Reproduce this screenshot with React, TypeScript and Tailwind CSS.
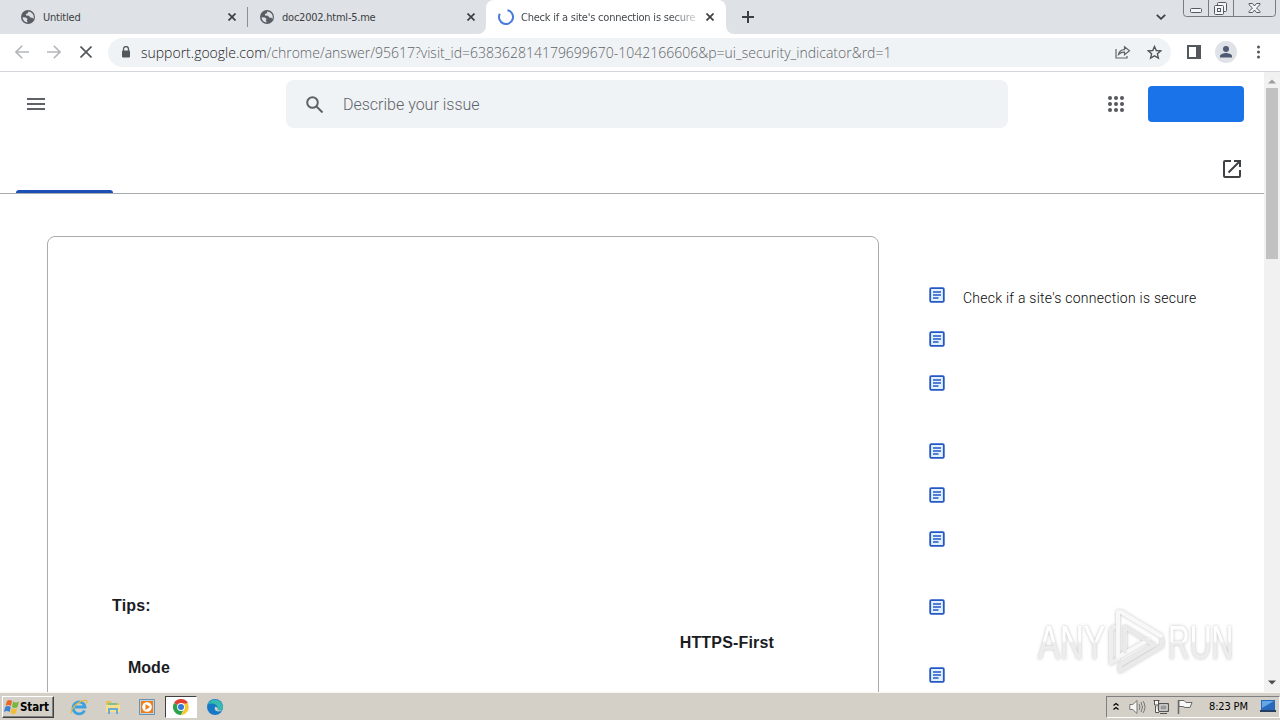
import React from 'react';

const uiFont = "font-['DejaVu_Sans_Condensed','DejaVu_Sans',sans-serif]";

function Globe() {
  return (
    <svg className="h-[14px] w-[14px] shrink-0" viewBox="0 0 14 14">
      <circle cx="7" cy="7" r="7" fill="#5a5e64" />
      <path d="M1.6 7.2 4.8 7.4 6.6 9l-.8 1.2 1 2.2A5.5 5.5 0 0 1 1.6 7.2ZM7.4 1.5l-.6 1.8-1.9.8.2 1.5 3 .2 1.1 1.6 2.2.3 1 1.2A5.5 5.5 0 0 0 7.4 1.5Z" fill="#dee1e6" />
    </svg>
  );
}

function Cross({ className = '' }: { className?: string }) {
  return (
    <svg className={`h-2 w-2 shrink-0 ${className}`} viewBox="0 0 8 8" stroke="#3c4043" strokeWidth="1.7">
      <path d="M.5.5l7 7M7.5.5l-7 7" />
    </svg>
  );
}

function TabStrip() {
  return (
    <div className={`flex h-[34px] bg-[#dee1e6] text-[11px] leading-[14px] text-[#3c4043] ${uiFont}`}>
      <div className="flex w-[247px] items-center pr-[11px] pl-[21px]">
        <Globe />
        <span className="mt-[2px] ml-2 flex-1 tracking-[-0.2px]">Untitled</span>
        <Cross />
      </div>
      <div className="mt-[7px] h-5 w-px bg-[#8b8e93]" />
      <div className="flex w-[238px] items-center pr-[11px] pl-3">
        <Globe />
        <span className="mt-[2px] ml-2 flex-1 tracking-[-0.23px]">doc2002.html-5.me</span>
        <Cross />
      </div>
      <div className="relative flex w-[240px] items-center rounded-t-lg bg-white pr-3 pl-3">
        <svg className="absolute bottom-0 -left-2 h-2 w-2" viewBox="0 0 8 8"><path d="M8 0v8H0a8 8 0 0 0 8-8Z" fill="#fff" /></svg>
        <svg className="absolute -right-2 bottom-0 h-2 w-2" viewBox="0 0 8 8"><path d="M0 0v8h8a8 8 0 0 1-8-8Z" fill="#fff" /></svg>
        <svg className="h-4 w-4 shrink-0" viewBox="0 0 16 16" fill="none" stroke="#4a7bdc" strokeWidth="2"><path d="M9.5 1.2A7 7 0 1 1 1.8 4.8" /></svg>
        <span className="mt-[2px] ml-[7px] w-[175px] overflow-hidden bg-linear-to-r from-[#3c4043] from-85% to-[#d5d7da] bg-clip-text whitespace-nowrap text-transparent tracking-[-0.22px]">Check if a site's connection is secure</span>
        <Cross className="ml-[10px]" />
      </div>
      <svg className="mt-[11px] ml-4 h-3 w-3" viewBox="0 0 12 12" stroke="#3c4043" strokeWidth="2"><path d="M6 0v12M0 6h12" /></svg>
      <svg className="mt-[14px] ml-[402px] h-[6px] w-[10px]" viewBox="0 0 10 6" fill="none" stroke="#3c4043" strokeWidth="1.8"><path d="m.8.8 4.2 4 4.2-4" /></svg>
      <svg className="ml-[16px] h-[18px] w-[95px]" viewBox="0 0 95 18" fill="none" stroke="#777b82">
        <path d="M1.5 0v13.5q0 3 3 3h86q3 0 3-3V0M26.5 0v16M51.5 0v16" />
        <g stroke="#555961"><rect x="8.500" y="8.500" width="11" height="4" rx="1" fill="#f4f5f7" />
        <rect x="35.500" y="2.500" width="9" height="9" rx="1" fill="#f4f5f7" /><rect x="32.500" y="5.500" width="9" height="9" rx="1" fill="#f4f5f7" /><rect x="35.500" y="8.500" width="3" height="3" />
        <path d="M67 3.500h3.500l2 2.500 2-2.500H78v1.200L74.500 8l3.500 3.500v1h-3.500l-2-2.500-2 2.500H67v-1L70.500 8 67 4.700Z" fill="#f4f5f7" /></g>
      </svg>
    </div>
  );
}

function Toolbar() {
  return (
    <div className="flex h-[38px] items-center border-b border-[#d3d6da] bg-white pb-px pl-[15px]">
      <svg className="h-[14px] w-[14px]" viewBox="0 0 14 14" fill="none" stroke="#b4b6b9" strokeWidth="1.6"><path d="M14 7H1M7.200.8 1 7l6.200 6.200" /></svg>
      <svg className="ml-[18px] h-[14px] w-[14px]" viewBox="0 0 14 14" fill="none" stroke="#b4b6b9" strokeWidth="1.600"><path d="M0 7h13M6.800.8 13 7l-6.200 6.200" /></svg>
      <svg className="ml-[19px] h-3 w-3" viewBox="0 0 12 12" stroke="#54575b" strokeWidth="1.700"><path d="m.5.5 11 11M11.500.5l-11 11" /></svg>
      <div className="ml-4 flex h-[29px] w-[1063px] items-center rounded-full bg-[#f0f3f5] pl-[13px]">
        <svg className="h-3 w-[10px]" viewBox="0 0 10 12"><path d="M2.500 5V3a2.500 2.500 0 0 1 5 0v2" fill="none" stroke="#54585d" strokeWidth="1.300" /><rect x="1" y="4.500" width="8" height="7" rx="1" fill="#54585d" /></svg>
        <span className="mt-[2px] ml-[10px] w-[751px] font-['Open_Sans','Noto_Sans',sans-serif] text-[14px] leading-5 font-light whitespace-nowrap text-[#5f6368]"><span className="text-[#202124]">support.google.com</span>/chrome/answer/95617?visit_id=638362814179699670-1042166606&amp;p=ui_security_indicator&amp;rd=1</span>
        <svg className="ml-[223px] h-[14px] w-4" viewBox="0 0 16 14" fill="none" stroke="#5f6368" strokeWidth="1.200"><path d="M1 4v9h11v-2M3.500 9.500c.6-3 2.600-4.700 6-4.800V1.800l5 4-5 4V7.200c-2.600 0-4.400.7-6 2.300Z" /></svg>
        <svg className="ml-4 h-[15px] w-[15px]" viewBox="0 0 15 15" fill="none" stroke="#54575b" strokeWidth="1.400"><path d="m7.500 1.500 1.800 4 4.400.4-3.300 2.900 1 4.300-3.900-2.300-3.900 2.300 1-4.300L1.300 5.900l4.400-.4Z" /></svg>
      </div>
      <svg className="ml-4 h-[14px] w-[14px]" viewBox="0 0 14 14"><path d="M1 1h12v12H1z" fill="none" stroke="#54575b" strokeWidth="2" /><path d="M9 1h4v12H9z" fill="#54575b" /></svg>
      <svg className="ml-[14px] h-[22px] w-[22px]" viewBox="0 0 22 22"><circle cx="11" cy="11" r="11" fill="#dfe2e7" /><circle cx="11" cy="8" r="3" fill="#4f5b73" /><path d="M5 16.500v-1.500c0-2 4-3 6-3s6 1 6 3v1.500Z" fill="#4f5b73" /></svg>
      <svg className="ml-5 h-[14px] w-[3px]" viewBox="0 0 3 14" fill="#54575b"><circle cx="1.500" cy="2" r="1.500" /><circle cx="1.500" cy="7" r="1.500" /><circle cx="1.500" cy="12" r="1.500" /></svg>
    </div>
  );
}

function ArticleIcon() {
  return (
    <svg className="h-4 w-4 shrink-0" viewBox="0 0 16 16" fill="none" stroke="#2458c2" strokeWidth="1.800">
      <rect x="1.200" y="1.200" width="13.600" height="13.600" rx="1" fill="#e3f0ff" /><path d="M4 5h8M4 8h8M4 11h5.500" strokeWidth="1.600" />
    </svg>
  );
}

const links = [
  { label: "Check if a site's connection is secure", height: 'h-11' },
  { label: '', height: 'h-11' },
  { label: '', height: 'h-[68px]' },
  { label: '', height: 'h-11' },
  { label: '', height: 'h-11' },
  { label: '', height: 'h-[68px]' },
  { label: '', height: 'h-[68px]' },
  { label: '', height: 'h-4' },
];

function Page() {
  return (
    <main className="flex min-w-0 flex-1 flex-col overflow-hidden bg-white font-['Liberation_Sans',Arial,sans-serif]">
      <header className="flex h-[64px] items-center pl-[27px]">
        <svg className="h-3 w-[18px]" viewBox="0 0 18 12" fill="#5f6368"><path d="M0 0h18v2H0zM0 5h18v2H0zM0 10h18v2H0z" /></svg>
        <div className="ml-[241px] flex h-12 w-[722px] items-center rounded-lg bg-[#eff3f6] pl-5">
          <svg className="h-[17px] w-[17px]" viewBox="0 0 17 17" fill="none" stroke="#5f6368" strokeWidth="2"><circle cx="6.500" cy="6.500" r="5.300" /><path d="m10.500 10.500 6 6" /></svg>
          <span className="mt-px ml-5 font-['Roboto',sans-serif] text-[16px] leading-6 font-light text-[#5f6368]">Describe your issue</span>
        </div>
        <svg className="ml-[100px] h-4 w-4" viewBox="0 0 16 16" fill="#54575b">
          {[2, 8, 14].map((y) => [2, 8, 14].map((x) => <circle key={`${x}-${y}`} cx={x} cy={y} r="2" />))}
        </svg>
        <div className="ml-6 h-9 w-24 rounded-[4px] bg-[#1a73e8]" />
      </header>
      <nav className="flex h-[58px] items-end justify-between border-b border-[#a9abae] pr-[23px] pl-4">
        <div className="h-[3px] w-[97px] rounded-t-[3px] bg-[#1b4fb3]" />
        <svg className="mb-[15px] h-[18px] w-[18px]" viewBox="0 0 18 18" fill="none" stroke="#3f4145" strokeWidth="2"><path d="M8 1H2q-1 0-1 1v14q0 1 1 1h14q1 0 1-1v-6M11 1h6v6M17 1 5.500 12.500" /></svg>
      </nav>
      <div className="flex min-h-0 flex-1 pt-[42px] pl-[47px]">
        <article className="h-[520px] w-[832px] shrink-0 rounded-lg border border-[#a9abae] pt-[356px] pl-16 text-[16px] leading-[25px] font-bold text-[#1b1c1f]">
          <p className="tracking-[0.15px]">Tips:</p>
          <p className="mt-3 pr-[104px] text-right tracking-[0.17px]">HTTPS-First</p>
          <p className="pl-4">Mode</p>
        </article>
        <ul className="ml-[50px] pt-[51px]">
          {links.map(({ label, height }, i) => (
            <li key={i} className={`flex ${height}`}>
              <ArticleIcon />
              <span className="mt-[1px] ml-[18px] font-['Roboto',sans-serif] text-[14px] leading-5 font-light whitespace-nowrap text-[#08090a] tracking-[0.245px]">{label}</span>
            </li>
          ))}
        </ul>
      </div>
    </main>
  );
}

function Scrollbar() {
  return (
    <div className="flex w-4 flex-col items-center bg-[#f1f1f1]">
      <svg className="mt-[7px] h-[5px] w-2" viewBox="0 0 8 5"><path d="M0 4.500 4 .5l4 4Z" fill="#9b9b9b" /></svg>
      <div className="mt-1 h-[171px] w-3 bg-[#c1c1c1]" />
      <svg className="mt-auto mb-[7px] h-[5px] w-2" viewBox="0 0 8 5"><path d="m0 .5 4 4 4-4Z" fill="#4c4c4c" /></svg>
    </div>
  );
}

function Watermark() {
  return (
    <svg className="absolute top-[602px] left-[1030px] h-[78px] w-[215px]" viewBox="0 0 215 78">
      <defs>
        <filter id="glow" x="-10%" y="-10%" width="120%" height="120%"><feDropShadow dx="0" dy="0" stdDeviation="1.600" floodColor="#777" floodOpacity="0.5" /></filter>
        <linearGradient id="mark" x1="0" y1="0" x2="0" y2="1"><stop offset=".48" stopColor="#fff" /><stop offset=".52" stopColor="#ededed" /></linearGradient>
      </defs>
      <g filter="url(#glow)" fill="url(#mark)" fontFamily="Liberation Sans, sans-serif" fontSize="49">
        <text transform="translate(8 57) scale(0.67 1)">ANY</text>
        <text transform="translate(138 57) scale(0.615 1)">RUN</text>
      </g>
      <g filter="url(#glow)" fill="none" strokeWidth="4" strokeLinejoin="round" strokeLinecap="round">
        <path d="M81 28v33l7-4M81 28l3-3" stroke="#eee" />
        <path d="M88 55V11q0-2 3-1l40 24M88 22v33l30-17" stroke="#f8f8f8" />
        <path d="m95 25 29 18-34 20v6l42-25v-6M95 25v25" stroke="#eaeaea" />
      </g>
    </svg>
  );
}

function Taskbar() {
  return (
    <footer className={`flex h-7 items-center border-t border-[#f7f6f3] bg-[#d4d0c8] pl-[2px] text-black ${uiFont}`}>
      <div className="mr-4 flex h-[22px] w-[52px] shrink-0 items-center border border-t-white border-r-[#404040] border-b-[#404040] border-l-white pl-px shadow-[inset_-1px_-1px_0_#808080]">
        <svg className="h-4 w-4 shrink-0" viewBox="0 0 16 16">
          <path d="M3 2q3-2 5 0L7 7Q4 5 1.500 7Z" fill="#e8662a" /><path d="M9 2.500q3 2 6 0L13.500 8q-3 2-5.500 0Z" fill="#76b83f" /><path d="M1.200 8q3-2 5.500 0l-1 5Q3 11 0 13Z" fill="#3d82d0" /><path d="M7.700 9q3 2 5.500 0l-1.300 5q-3 2-5.400 0Z" fill="#f2bd32" />
        </svg>
        <span className="mt-px text-[11.5px] leading-4 font-bold tracking-[-0.1px]">Start</span>
      </div>
      <svg className="h-[18px] w-[18px]" viewBox="0 0 18 18" fill="none">
        <path d="M14.500 12.500A6 6 0 1 1 15 9H5" stroke="#3ba2df" strokeWidth="2.800" /><path d="M1 15.500C1 9 11 1 16.500 2.500c1 .5.500 2-.5 3" stroke="#e7b93e" strokeWidth="1.200" />
      </svg>
      <svg className="ml-[17px] h-4 w-4" viewBox="0 0 16 16"><path d="M1 2h5l1 2h7v9H1z" fill="#e6c15b" /><path d="M3 4h9v3H3z" fill="#7fbf94" /><path d="M1 6h14v7H1z" fill="#f7df8c" /><path d="M3 9h10v6h-2v-4H5v4H3z" fill="#6ba9d8" /></svg>
      <svg className="ml-[18px] h-4 w-4" viewBox="0 0 16 16"><path d="M.5.500h15v15H.5z" fill="#b9d5e9" stroke="#6d91ad" /><path d="M2 2h12v12H2z" fill="#ef7e19" /><circle cx="8" cy="8" r="4.800" fill="#fff" /><path d="m6.500 5 4.500 3-4.500 3z" fill="#ef7e19" /></svg>
      <div className="ml-[10px] flex h-[22px] w-8 items-center justify-center border border-t-[#404040] border-r-white border-b-white border-l-[#404040] bg-white">
        <svg className="h-4 w-4" viewBox="0 0 16 16"><path d="M8 8 1.070 4A8 8 0 0 1 14.930 4Z" fill="#df4034" /><path d="M8 8 1.070 4A8 8 0 0 0 8 16l3-6Z" fill="#2ba34b" /><path d="M8 4.500h6.930A8 8 0 0 1 8 16l3.500-6Z" fill="#f8c92f" /><circle cx="8" cy="8" r="3.900" fill="#fff" /><circle cx="8" cy="8" r="3" fill="#3479dc" /></svg>
      </div>
      <svg className="ml-[10px] h-4 w-4" viewBox="0 0 16 16"><circle cx="8" cy="8" r="8" fill="#1679c7" /><path d="M.5 6A8 8 0 0 1 16 8c0 3-3 4-5.500 3-1-.5-.5-1.200 0-2C11 5 4 3 .5 6Z" fill="#36bbb0" /><path d="M10.500 9c1 1.500-1 2 1 2.300 2 .3 3.700-.3 4.200-1.500L14 12c-4 1.500-8-1-5.500-4.500Z" fill="#d4d0c8" /></svg>
      <div className="ml-auto flex h-[22px] w-[174px] items-center border border-t-[#808080] border-r-white border-b-white border-l-[#808080] pl-[6px]">
        <svg className="h-[9px] w-[6px]" viewBox="0 0 6 9" fill="none" stroke="#000" strokeWidth="1.300"><path d="m.5 3.500 2.500-2 2.500 2M.5 7.500l2.500-2 2.500 2" /></svg>
        <svg className="ml-[10px] h-4 w-[17px]" viewBox="0 0 17 16" fill="#f6f6f3" stroke="#777"><path d="M.8 5.500h3L8 1.500v13l-4.200-4h-3Z" /><path d="M10 5q2 3 0 6M12 3q3 5 0 10M14 2q4 6 0 12" fill="none" /></svg>
        <svg className="ml-[7px] h-4 w-4" viewBox="0 0 16 16" stroke="#555"><path d="M5.500 4.500h10v8h-10z" fill="#aaa" stroke="#555" /><path d="M7 6h7v5H7z" fill="#999" stroke="#ddd" /><path d="M7 14.500h7M2.500 7v6.500H6M1.500 1v5h4V1M.5 1.500h6" fill="#f8f8f8" /></svg>
        <svg className="ml-2 h-[15px] w-4" viewBox="0 0 16 15" fill="#f8f8f4" stroke="#686868"><path d="M1.500 1v14" strokeWidth="1.500" /><path d="M2 1.500h5l2 2h6L13 8.500H8L6 7.500H2Z" /></svg>
        <span className="mt-px ml-4 w-[42px] text-[11px] leading-4 whitespace-nowrap tracking-[-0.15px]">8:23 PM</span>
        <svg className="ml-[9px] h-[13px] w-4" viewBox="0 0 16 13"><path d="M1 0h14v11H1z" fill="#2868bd" /><path d="M2 1h12L2 8z" fill="#65a7e5" /><path d="M0 10h16v2H0z" fill="#263f60" /></svg>
      </div>
    </footer>
  );
}

export default function App() {
  return (
    <div className="relative flex h-[720px] w-[1280px] flex-col overflow-hidden bg-white">
      <TabStrip />
      <Toolbar />
      <div className="flex min-h-0 flex-1">
        <Page />
        <Scrollbar />
      </div>
      <Taskbar />
      <Watermark />
    </div>
  );
}
